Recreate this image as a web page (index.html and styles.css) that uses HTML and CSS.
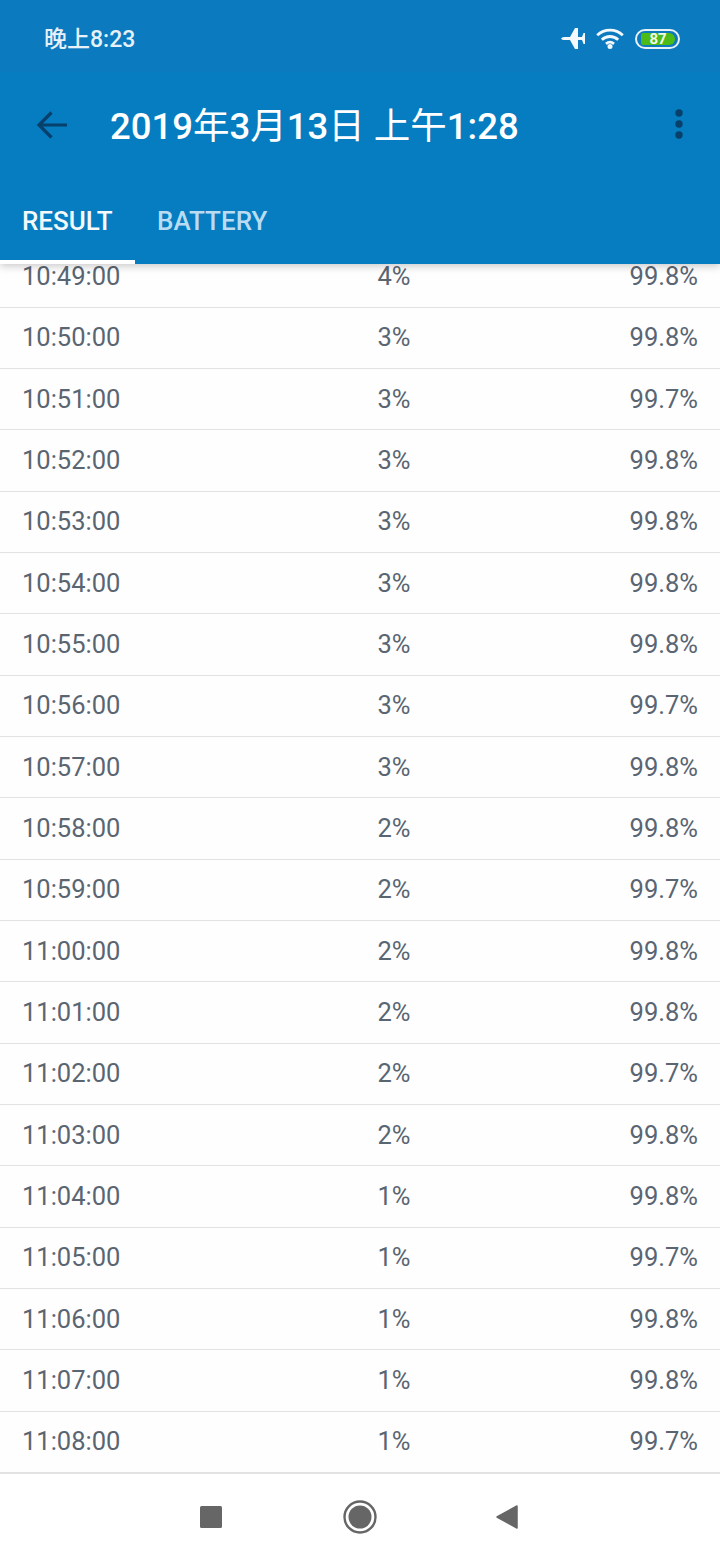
FILE: index.html
```html
<!DOCTYPE html>
<html lang="zh">
<head>
<meta charset="utf-8">
<title>Result</title>
<link rel="stylesheet" href="styles.css">
</head>
<body>
<div class="app">
  <header class="header">
    <div class="status">
      <span class="clock">晚上8:23</span>
      <div class="status-icons">
        <svg class="ic-plane" width="24" height="21" viewBox="0 0 24 21"><path fill="#f2f8fc" d="M0 10.500Q1 9 3 9H9L14 0H17V9H21L22.500 5H24V16H22.500L21 12H17V21H14L9 12H3Q1 12 0 10.500Z"/></svg>
        <svg class="ic-wifi" width="28" height="21" viewBox="0 0 28 21"><g fill="none" stroke="#f2f8fc" stroke-width="2.800"><path d="M1.200 7.200C8.500 .4 19.500 .4 26.800 7.200"/><path d="M5.800 11.800c4.800-4.400 11.600-4.400 16.400 0"/><path d="M10 15.800c2.400-2 5.600-2 8 0"/></g><circle cx="14" cy="18.500" r="2.500" fill="#f2f8fc"/></svg>
        <div class="battery"><div class="battery-fill"><span>87</span></div></div>
      </div>
    </div>
    <div class="toolbar">
      <svg class="ic-back" width="32" height="28" viewBox="0 0 32 28"><path fill="none" stroke="#07406a" stroke-width="3.200" d="M31 14H3.500M15.500 1.500 3 14l12.500 12.500"/></svg>
      <h1 class="title">2019<span class="cjk">年</span>3<span class="cjk">月</span>13<span class="cjk">日 上午</span>1:28</h1>
      <svg class="ic-more" width="8" height="32" viewBox="0 0 8 32"><g fill="#07406a"><circle cx="4" cy="4" r="3.700"/><circle cx="4" cy="15" r="3.700"/><circle cx="4" cy="26" r="3.700"/></g></svg>
    </div>
    <nav class="tabs">
      <div class="tab tab-active">RESULT</div>
      <div class="tab">BATTERY</div>
    </nav>
  </header>
  <main class="list">
    <div class="rows">
      <div class="row"><span>10:49:00</span><span>4%</span><span>99.8%</span></div>
      <div class="row"><span>10:50:00</span><span>3%</span><span>99.8%</span></div>
      <div class="row"><span>10:51:00</span><span>3%</span><span>99.7%</span></div>
      <div class="row"><span>10:52:00</span><span>3%</span><span>99.8%</span></div>
      <div class="row"><span>10:53:00</span><span>3%</span><span>99.8%</span></div>
      <div class="row"><span>10:54:00</span><span>3%</span><span>99.8%</span></div>
      <div class="row"><span>10:55:00</span><span>3%</span><span>99.8%</span></div>
      <div class="row"><span>10:56:00</span><span>3%</span><span>99.7%</span></div>
      <div class="row"><span>10:57:00</span><span>3%</span><span>99.8%</span></div>
      <div class="row"><span>10:58:00</span><span>2%</span><span>99.8%</span></div>
      <div class="row"><span>10:59:00</span><span>2%</span><span>99.7%</span></div>
      <div class="row"><span>11:00:00</span><span>2%</span><span>99.8%</span></div>
      <div class="row"><span>11:01:00</span><span>2%</span><span>99.8%</span></div>
      <div class="row"><span>11:02:00</span><span>2%</span><span>99.7%</span></div>
      <div class="row"><span>11:03:00</span><span>2%</span><span>99.8%</span></div>
      <div class="row"><span>11:04:00</span><span>1%</span><span>99.8%</span></div>
      <div class="row"><span>11:05:00</span><span>1%</span><span>99.7%</span></div>
      <div class="row"><span>11:06:00</span><span>1%</span><span>99.8%</span></div>
      <div class="row"><span>11:07:00</span><span>1%</span><span>99.8%</span></div>
      <div class="row"><span>11:08:00</span><span>1%</span><span>99.7%</span></div>
    </div>
  </main>
  <footer class="navbar">
    <svg width="22" height="22" viewBox="0 0 22 22"><rect width="22" height="22" rx="1.500" fill="#666"/></svg>
    <svg width="34" height="34" viewBox="0 0 34 34"><circle cx="17" cy="17" r="15.500" fill="none" stroke="#666" stroke-width="2.400"/><circle cx="17" cy="17" r="11.500" fill="#666"/></svg>
    <svg class="nav-back" width="22" height="24" viewBox="0 0 22 24"><path fill="#666" stroke="#666" stroke-width="1.500" stroke-linejoin="round" d="M21 1v22L1 12z"/></svg>
  </footer>
</div>
</body>
</html>
```

FILE: styles.css
```css
* { box-sizing: border-box; }
html, body { margin: 0; padding: 0; }
body { font-family: Roboto, "Noto Sans CJK SC", sans-serif; background: #fff; }
.app { width: 720px; height: 1560px; display: flex; flex-direction: column; overflow: hidden; }

.header { position: relative; z-index: 2; background: #057dc0; height: 264px; flex: none; box-shadow: 0 2px 8px rgba(0,0,0,.22); }
.status { height: 72px; background: #0c7abf; display: flex; align-items: center; justify-content: space-between; padding: 5px 40px 0 44px; }
.clock { color: #e6f1f8; font-size: 23px; font-weight: 500; margin-top: -3px; }
.status-icons { display: flex; align-items: center; gap: 11px; }
.battery { width: 45px; height: 20px; border: 2px solid #e6f1f8; border-radius: 10px; padding: 2px; }
.battery-fill { width: 34px; height: 12px; margin-left: 2px; background: #4cbb17; border-radius: 2px 6px 6px 2px; display: flex; align-items: center; justify-content: center; }
.battery-fill span { color: #f2faea; font-size: 15px; font-weight: 700; line-height: 12px; }

.toolbar { height: 104px; display: flex; align-items: center; padding: 1px 37px 0 36px; }
.title { margin: 5px 0 0 42px; flex: 1; color: #fff; font-size: 36.500px; font-weight: 500; line-height: 1; white-space: nowrap; }
.cjk { font-weight: 400; }
.tabs { display: flex; height: 88px; }
.tab { height: 88px; padding: 2px 22px 0; display: flex; align-items: center; color: #b9dcf2; font-size: 26px; font-weight: 500; }
.tab-active { color: #f4f9fc; width: 135px; padding-top: 5px; border-bottom: 4px solid #fff; }

.list { flex: 1; overflow: hidden; background: #fefefe; min-height: 0; }
.rows { margin-top: -17.500px; }
.row { height: 61.330px; display: grid; grid-template-columns: 355.500px 1fr auto; align-items: center; padding: 0 22px 1px; border-bottom: 1.500px solid #e2e2e2; color: #5a6572; font-size: 25.500px; }

.navbar { flex: none; height: 87px; background: #fff; border-top: 1.500px solid #e2e2e2; display: flex; align-items: center; justify-content: center; gap: 121px; }
.nav-back { margin: 0 2px 0 -2px; }
```
